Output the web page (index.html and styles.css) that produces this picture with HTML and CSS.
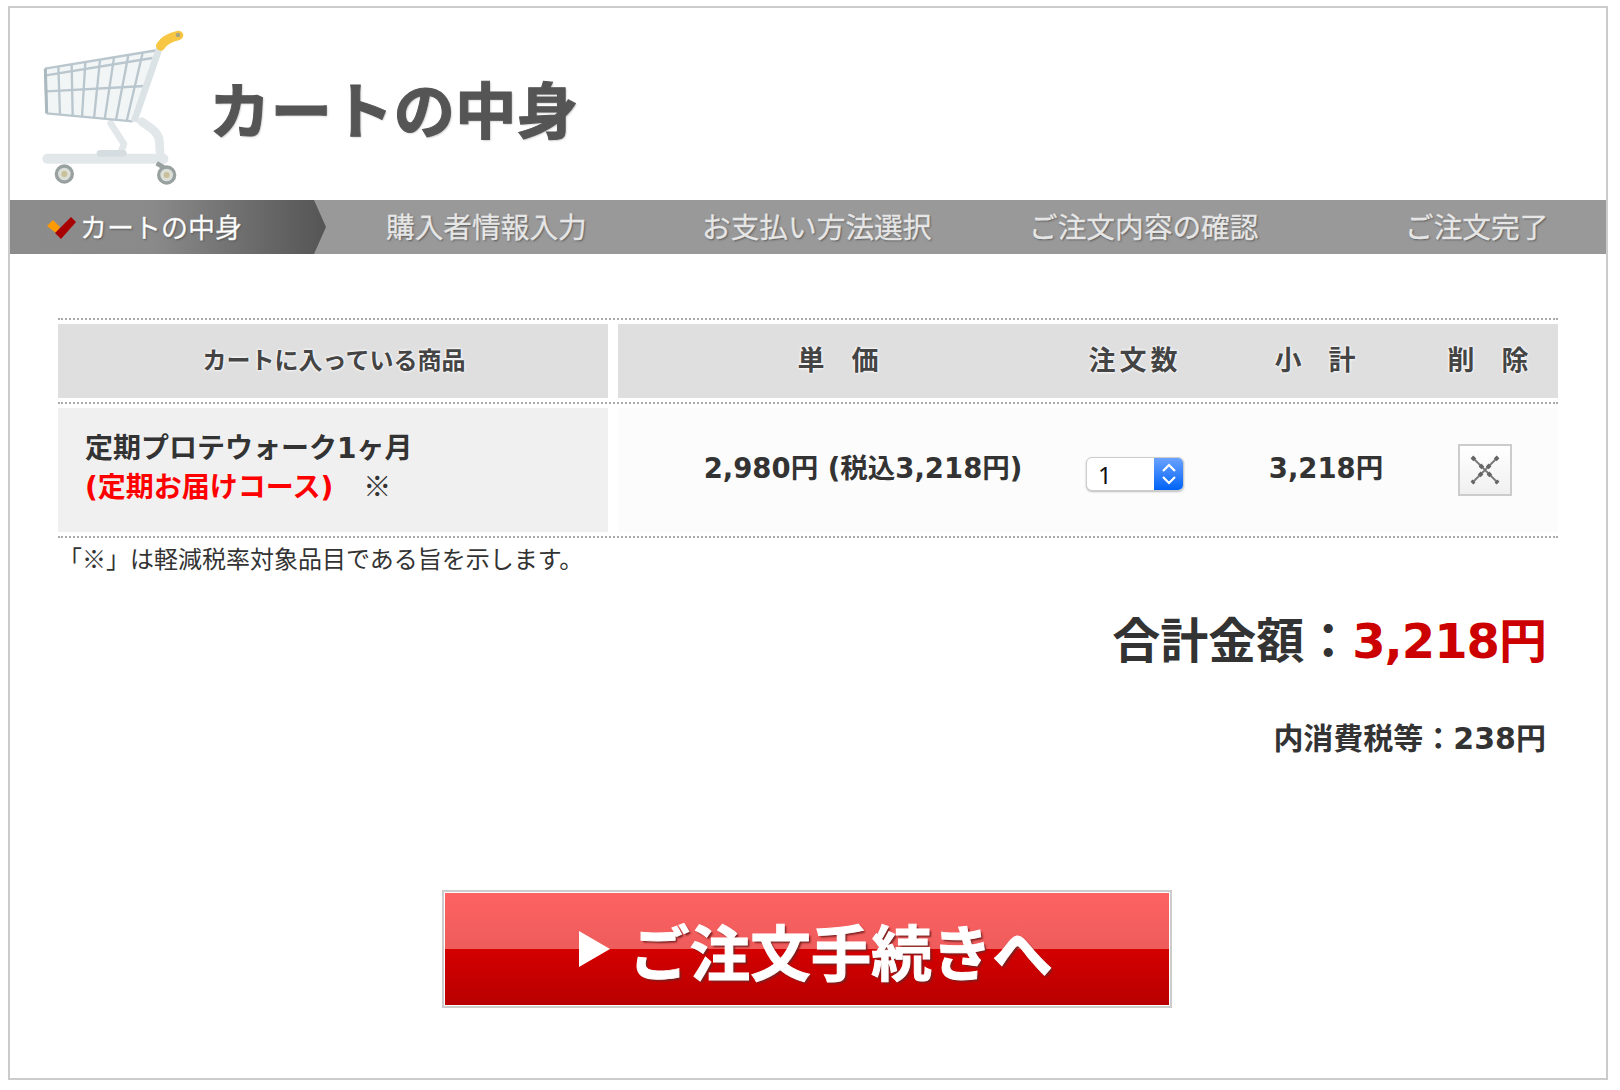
FILE: index.html
```html
<!DOCTYPE html>
<html lang="ja">
<head>
    <meta charset="UTF-8">
    <title>カートの中身</title>
    <link rel="stylesheet" href="styles.css">
</head>
<body>
    <div class="frame">
        <div class="page-head">
            <svg class="cart-icon" width="170" height="175" viewBox="0 0 510 525" fill="none">
                <path d="M45 146 L385 90 L310 305 L50 280 Z" fill="#f2f5f6"/>
                <g stroke="#e2e7ea" stroke-linecap="round" stroke-linejoin="round">
                    <path d="M242 310 L282 372 L270 402" stroke-width="20"/>
                    <path d="M335 305 C365 325 388 340 388 365 L392 425" stroke-width="26"/>
                    <path d="M52 416 H400" stroke-width="30"/>
                    <path d="M210 400 H280" stroke="#d6dde0" stroke-width="20"/>
                </g>
                <path d="M380 430 L405 445" stroke="#98a19f" stroke-width="14"/>
                <circle cx="103" cy="462" r="24" fill="#dcdfd8" stroke="#98a19f" stroke-width="10"/>
                <circle cx="103" cy="462" r="9" fill="#c9c09a"/>
                <circle cx="410" cy="465" r="24" fill="#dcdfd8" stroke="#98a19f" stroke-width="10"/>
                <circle cx="410" cy="465" r="9" fill="#c9c09a"/>
                <g stroke="#b9c6cd" stroke-width="7">
                    <path d="M45 146 L385 90 M48 166 L368 114 M50 214 L345 198 M50 280 L308 304"/>
                    <path d="M46 146 L50 280 M85 140 L90 284 M125 134 L128 288 M166 127 L156 292 M210 120 L192 296 M252 113 L224 298 M295 106 L258 300 M338 98 L290 303"/>
                </g>
                <path d="M46 146 L50 280" stroke="#aab8c0" stroke-width="9"/>
                <path d="M388 85 L312 305" stroke="#dce3e6" stroke-width="20"/>
                <path d="M392 78 C402 60 420 52 446 46" stroke="#f7c744" stroke-width="28" stroke-linecap="round"/>
                <circle cx="444" cy="45" r="7" fill="#a9a57e"/>
            </svg>
            <h1 class="page-title">カートの中身</h1>
        </div>

        <div class="steps">
            <div class="step step-active">
                <svg class="step-check" width="30" height="24" viewBox="0 0 30 24">
                    <path d="M0 10 L6 4 L13 11 L9 17 Z" fill="#f90"/>
                    <path d="M8 17 L14 23 L29 6 L24 1 L13 12 Z" fill="#a80000"/>
                </svg>
                <span>カートの中身</span>
            </div>
            <div class="step">購入者情報入力</div>
            <div class="step">お支払い方法選択</div>
            <div class="step">ご注文内容の確認</div>
            <div class="step">ご注文完了</div>
        </div>

        <div class="content">
            <div class="cart-table">
                <div class="cart-head">
                    <div class="col-item">カートに入っている商品</div>
                    <div class="col-rest">
                        <div>単　価</div>
                        <div class="col-qty">注文数</div>
                        <div>小　計</div>
                        <div>削　除</div>
                    </div>
                </div>
                <div class="cart-row">
                    <div class="col-item">
                        <div class="item-line">定期プロテウォーク1ヶ月</div>
                        <div class="item-line"><span class="red">(定期お届けコース)</span><span class="mark">※</span></div>
                    </div>
                    <div class="col-rest">
                        <div class="cell-price">2,980円 (税込3,218円)</div>
                        <div class="cell-qty">
                            <div class="qty-select">
                                <span class="qty-value">1</span>
                                <span class="qty-arrows">
                                    <svg width="16" height="26" viewBox="0 0 16 26" fill="none" stroke="#fff" stroke-width="2.2">
                                        <path d="M2 10 L8 4 L14 10 M2 16 L8 22 L14 16"/>
                                    </svg>
                                </span>
                            </div>
                        </div>
                        <div class="cell-sub">3,218円</div>
                        <div class="cell-del">
                            <button class="del-btn" type="button" aria-label="削除">
                                <svg width="30" height="30" viewBox="0 0 30 30" stroke="#666" fill="none">
                                    <path d="M2 2 L28 28 M28 2 L2 28" stroke="#777" stroke-width="1.8"/>
                                    <path d="M2 2 L28 28 M28 2 L2 28" stroke-width="4" stroke-dasharray="4 7.3"/>
                                </svg>
                            </button>
                        </div>
                    </div>
                </div>
            </div>
            <p class="note">「※」は軽減税率対象品目である旨を示します。</p>

            <div class="total">合計金額：<span class="total-price">3,218円</span></div>
            <div class="tax">内消費税等：238円</div>

            <div class="order-wrap">
                <a class="order-btn" href="#">
                    <span class="order-arrow"></span>
                    <span>ご注文手続きへ</span>
                </a>
            </div>
        </div>
    </div>
</body>
</html>
```

FILE: styles.css
```css
* {
    box-sizing: border-box;
}
body {
    margin: 0;
    background: #fff;
    color: #333;
    font-family: "Noto Sans CJK JP", "Noto Sans", sans-serif;
}
.frame {
    width: 1600px;
    height: 1074px;
    margin: 6px 0 0 8px;
    border: 2px solid #ccc;
}
.page-head {
    display: flex;
    align-items: center;
    height: 192px;
    padding: 7px 0 0 20px;
}
.cart-icon {
    filter: blur(0.7px);
}
.page-title {
    margin: 0 0 0 9px;
    font-size: 61.5px;
    line-height: 1;
    font-weight: 700;
    color: #555;
    -webkit-text-stroke: 1px #555;
    text-shadow: 1px 1px 2px #bbb;
}

/* steps bar */
.steps {
    display: grid;
    grid-template-columns: 376px 316px 327px 376px 1fr;
    align-items: center;
    height: 54px;
    background: #999;
    color: #e6e6e6;
    font-size: 28.7px;
    line-height: 52px;
    -webkit-text-stroke: 0.3px #e6e6e6;
    text-shadow: 1px 1px 2px #555;
}
.step {
    height: 54px;
    white-space: nowrap;
}
.step-active {
    display: flex;
    align-items: center;
    justify-self: start;
    width: 316px;
    padding-left: 37px;
    background: linear-gradient(to right, #8c8c8c, #8a8a8a 45%, #555);
    clip-path: polygon(0 0, 304px 0, 316px 50%, 304px 100%, 0 100%);
    color: #fff;
    font-size: 27px;
}
.step-active span {
    margin-left: 3px;
}
.step-check {
    margin-top: 2px;
}

/* cart table */
.content {
    padding: 64px 48px 0;
}
.cart-table {
    border-top: 2px dotted #aaa;
}
.cart-head,
.cart-row {
    display: grid;
    grid-template-columns: 550px 940px;
    gap: 10px;
    padding: 4px 0;
    border-bottom: 2px dotted #aaa;
}
.cart-head {
    height: 84px;
    font-size: 24px;
    font-weight: 700;
    color: #444;
    text-shadow: 0 0 3px #fff, 0 0 3px #fff;
}
.cart-head > div {
    background: #dfdfdf;
}
.cart-head .col-item {
    display: flex;
    align-items: center;
    justify-content: center;
    padding: 0 0 6px 2px;
}
.col-rest {
    display: grid;
    grid-template-columns: 440px 154px 206px 140px;
    align-items: center;
    text-align: center;
}
.cart-head .col-rest {
    padding-bottom: 6px;
    font-size: 27px;
}
.col-qty {
    letter-spacing: 4px;
}
.cart-row {
    height: 134px;
    font-family: "DejaVu Sans", "Noto Sans CJK JP", sans-serif;
    font-size: 27.5px;
    font-weight: 700;
}
.cart-row .col-item {
    display: flex;
    flex-direction: column;
    justify-content: center;
    padding: 0 0 6px 27px;
    background: #f0f0f0;
    font-size: 28px;
}
.item-line {
    height: 37px;
    line-height: 37px;
}
.cart-row .col-rest {
    background: #fcfcfc;
}
.red {
    color: #f00;
}
.mark {
    margin-left: 30px;
    font-family: "Noto Sans CJK JP", sans-serif;
    font-weight: 400;
}
.cell-price {
    padding-left: 50px;
    padding-bottom: 8px;
    white-space: nowrap;
}
.cell-sub {
    padding-left: 22px;
    padding-bottom: 8px;
}
.cell-qty,
.cell-del {
    display: flex;
    justify-content: center;
}
.cell-qty {
    padding-top: 8px;
}
.qty-select {
    display: flex;
    width: 98px;
    height: 34px;
    border: 1px solid #ccc;
    border-radius: 6px;
    background: #fff;
    box-shadow: 0 1px 2px #bbb;
    overflow: hidden;
}
.qty-value {
    flex: 1;
    padding-left: 11px;
    font-family: "Noto Sans", sans-serif;
    font-size: 24px;
    line-height: 34px;
    font-weight: 400;
    color: #111;
    text-align: left;
}
.qty-arrows {
    display: flex;
    align-items: center;
    justify-content: center;
    width: 29px;
    background: linear-gradient(#6aa2ff, #0063f7);
}
.del-btn {
    display: flex;
    align-items: center;
    justify-content: center;
    width: 54px;
    height: 52px;
    padding: 0;
    margin-right: 6px;
    border: 2px solid #ccc;
    background: linear-gradient(#fff, #f0f0f0);
}
.note {
    margin: 2px 0 0;
    font-size: 24px;
    line-height: 36px;
    color: #333;
}

/* totals */
.total {
    margin-top: 30px;
    padding-right: 12px;
    font-family: "DejaVu Sans", "Noto Sans CJK JP", sans-serif;
    text-align: right;
    font-size: 48px;
    line-height: 70px;
    font-weight: 700;
}
.total-price {
    letter-spacing: -1px;
    color: #c00;
}
.tax {
    margin-top: 41px;
    padding-right: 12px;
    font-family: "DejaVu Sans", "Noto Sans CJK JP", sans-serif;
    text-align: right;
    font-size: 30px;
    line-height: 44px;
    font-weight: 700;
}

/* order button */
.order-wrap {
    display: flex;
    justify-content: center;
    margin-top: 129px;
    padding-right: 2px;
}
.order-btn {
    display: flex;
    align-items: center;
    justify-content: center;
    gap: 19px;
    width: 730px;
    height: 118px;
    padding-left: 18px;
    border: 2px solid #ccc;
    outline: 1px solid #fff;
    outline-offset: -3px;
    background: linear-gradient(#ff6262, #ee5c5c 50%, #d40000 50%, #b80000);
    color: #fff;
    font-size: 60.5px;
    font-weight: 700;
    text-decoration: none;
    -webkit-text-stroke: 1px #fff;
    text-shadow: 2px 2px 2px #7a2020;
}
.order-arrow {
    width: 0;
    height: 0;
    border-left: 31px solid #fff;
    border-top: 18px solid transparent;
    border-bottom: 18px solid transparent;
}
```
